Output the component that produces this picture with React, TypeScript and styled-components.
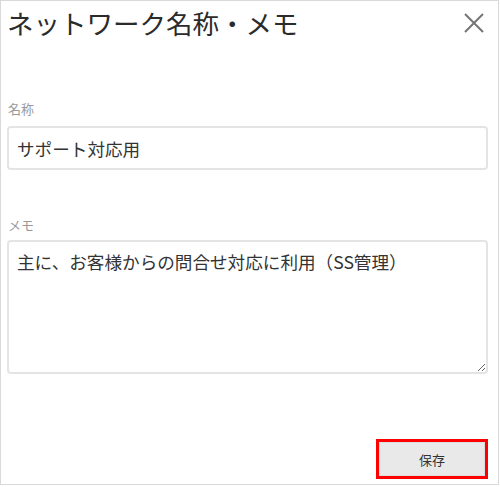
import React, { FC } from 'react'
import styled, { createGlobalStyle } from 'styled-components'

const GlobalStyle = createGlobalStyle`
  body {
    margin: 0;
    background: #fff;
    font-family: "Noto Sans CJK JP", "Noto Sans", sans-serif;
  }
`

const Dialog = styled.div`
  box-sizing: border-box;
  width: 499px;
  height: 485px;
  border: 1px solid #d9d9d9;
  background: #fff;
  padding: 0 10px 0 6px;
  display: flex;
  flex-direction: column;
`

const Header = styled.div`
  display: flex;
  align-items: center;
  justify-content: space-between;
  height: 44px;
`

const Title = styled.h1`
  margin: 0;
  font-size: 26.5px;
  font-weight: 400;
  line-height: 44px;
  color: #2b2b2b;
  letter-spacing: 0;
`

const CloseButton = styled.button`
  display: flex;
  align-items: center;
  justify-content: center;
  width: 24px;
  height: 24px;
  margin-right: 2px;
  padding: 0;
  border: none;
  background: none;
  cursor: pointer;
`

const Field = styled.div<{ $top: number }>`
  display: flex;
  flex-direction: column;
  margin-top: ${p => p.$top}px;
`

const Label = styled.label<{ $gap: number }>`
  font-size: 13px;
  line-height: 18px;
  color: #999;
  margin-bottom: ${p => p.$gap}px;
  padding-left: 1px;
`

const TextInput = styled.input`
  box-sizing: border-box;
  width: 100%;
  height: 44px;
  border: 2px solid #e4e4e4;
  border-radius: 4px;
  padding: 0 8px;
  font-family: inherit;
  font-size: 17.6px;
  color: #333;
  outline: none;
`

const TextArea = styled.textarea`
  box-sizing: border-box;
  width: 100%;
  height: 134px;
  border: 2px solid #e4e4e4;
  border-radius: 4px;
  padding: 8px 8px;
  font-family: inherit;
  font-size: 17.6px;
  line-height: 24px;
  color: #333;
  outline: none;
  resize: vertical;
`

const Footer = styled.div`
  display: flex;
  justify-content: flex-end;
  margin-top: 65px;
`

const Highlight = styled.div`
  border: 3px solid #ff0000;
  display: flex;
`

const SaveButton = styled.button`
  width: 106px;
  height: 34px;
  border: 1px solid #dcdcdc;
  background: #e9e9e9;
  color: #333;
  font-family: inherit;
  font-size: 13px;
  cursor: pointer;
`

const App: FC = () => {
  return (
    <Dialog>
      <GlobalStyle />
      <Header>
        <Title>ネットワーク名称・メモ</Title>
        <CloseButton aria-label="close">
          <svg width="22" height="22" viewBox="0 0 22 22">
            <path d="M2 2 L20 20 M20 2 L2 20" stroke="#757575" strokeWidth="2" />
          </svg>
        </CloseButton>
      </Header>
      <Field $top={55}>
        <Label $gap={8}>名称</Label>
        <TextInput defaultValue="サポート対応用" />
      </Field>
      <Field $top={46}>
        <Label $gap={6}>メモ</Label>
        <TextArea defaultValue="主に、お客様からの問合せ対応に利用（SS管理）" />
      </Field>
      <Footer>
        <Highlight>
          <SaveButton>保存</SaveButton>
        </Highlight>
      </Footer>
    </Dialog>
  )
}

export default App
